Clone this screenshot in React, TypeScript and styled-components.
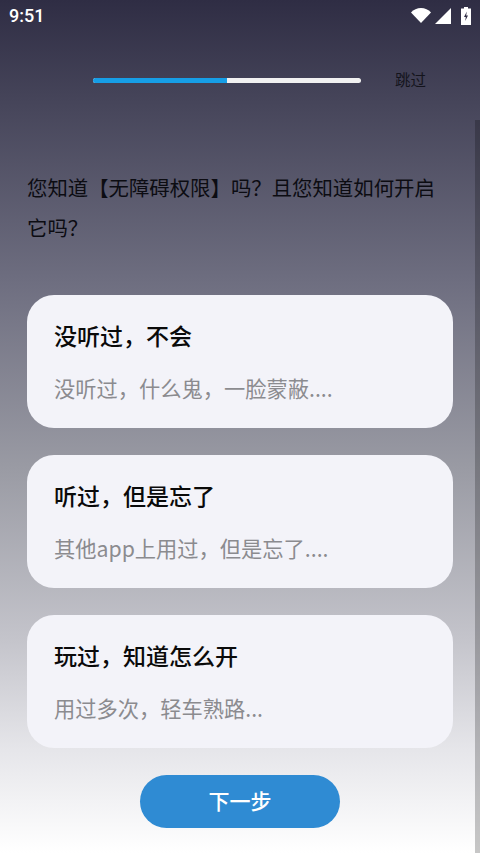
import React from "react";
import styled, { createGlobalStyle } from "styled-components";

const GlobalStyle = createGlobalStyle`
  html, body {
    margin: 0;
    padding: 0;
    height: 100%;
  }

  body {
    font-family: "Noto Sans CJK SC", "Roboto", sans-serif;
  }
`;

interface Choice {
  title: string;
  hint: string;
}

const choices: Choice[] = [
  { title: "没听过，不会", hint: "没听过，什么鬼，一脸蒙蔽...." },
  { title: "听过，但是忘了", hint: "其他app上用过，但是忘了...." },
  { title: "玩过，知道怎么开", hint: "用过多次，轻车熟路..." },
];

const WifiIcon = () => (
  <svg width="20" height="15" viewBox="0 0 20 15">
    <path d="M0 4.500C2.600 1.700 6.100 0 10 0s7.400 1.700 10 4.500L10 15z" fill="#fff" />
  </svg>
);

const SignalIcon = () => (
  <svg width="16" height="16" viewBox="0 0 16 16">
    <path d="M16 0v16H0z" fill="#fff" />
  </svg>
);

const BatteryIcon = () => (
  <svg width="10" height="18" viewBox="0 0 10 18">
    <path d="M3 0h4v1.500h3V18H0V1.500h3z" fill="#fff" />
    <path d="M5.800 4.500 3 10h1.800L4.200 14 7 8.500H5.200z" fill="#2f2d44" />
  </svg>
);

export default function App() {
  return (
    <>
      <GlobalStyle />
      <Screen>
        <StatusBar>
          <Clock>9:51</Clock>
          <StatusIcons>
            <WifiIcon />
            <SignalIcon />
            <BatterySlot>
              <BatteryIcon />
            </BatterySlot>
          </StatusIcons>
        </StatusBar>

        <ProgressRow>
          <ProgressTrack>
            <ProgressFill $percent={50} />
          </ProgressTrack>
          <SkipLabel>跳过</SkipLabel>
        </ProgressRow>

        <Question>您知道【无障碍权限】吗？且您知道如何开启它吗？</Question>

        <ChoiceList>
          {choices.map((choice) => (
            <ChoiceCard key={choice.title}>
              <ChoiceTitle>{choice.title}</ChoiceTitle>
              <ChoiceHint>{choice.hint}</ChoiceHint>
            </ChoiceCard>
          ))}
        </ChoiceList>

        <NextButton type="button">下一步</NextButton>
        <ScrollThumb />
      </Screen>
    </>
  );
}

// styled-components

const Screen = styled.div`
  position: relative;
  display: flex;
  flex-direction: column;
  width: 480px;
  height: 853px;
  overflow: hidden;
  background: linear-gradient(180deg, #2f2d44 0%, #46455a 12%, #6e6e80 33%, #9a9ba4 55%, #c4c4cb 75%, #e6e6ea 88%, #ffffff 100%);
`;

const StatusBar = styled.div`
  display: flex;
  align-items: center;
  justify-content: space-between;
  height: 31px;
  padding: 0 9px;
`;

const Clock = styled.span`
  font-family: "Roboto", sans-serif;
  font-size: 18px;
  font-weight: 500;
  color: #fff;
`;

const StatusIcons = styled.div`
  display: flex;
  align-items: center;
  gap: 4px;
`;

const BatterySlot = styled.span`
  display: flex;
  margin-left: 6px;
`;

const ProgressRow = styled.div`
  display: flex;
  align-items: center;
  height: 32px;
  margin-top: 33px;
  padding-left: 93px;
`;

const ProgressTrack = styled.div`
  width: 268px;
  height: 5px;
  border-radius: 3px;
  background: #f1f1f1;
  overflow: hidden;
`;

const ProgressFill = styled.div<{ $percent: number }>`
  width: ${(p) => p.$percent}%;
  height: 100%;
  background: #169ee6;
`;

const SkipLabel = styled.span`
  margin-left: 34px;
  margin-bottom: 2px;
  font-size: 15.5px;
  color: #14141c;
`;

const Question = styled.p`
  margin: 71px 27px 0;
  font-size: 20.4px;
  line-height: 40px;
  color: #0c0c12;
`;

const ChoiceList = styled.div`
  display: flex;
  flex-direction: column;
  gap: 27px;
  margin: 48px 27px 0;
`;

const ChoiceCard = styled.div`
  display: flex;
  flex-direction: column;
  gap: 23px;
  height: 133px;
  box-sizing: border-box;
  padding: 25px 27px 0;
  border-radius: 27px;
  background: #f3f3f9;
`;

const ChoiceTitle = styled.div`
  font-size: 23px;
  font-weight: 500;
  line-height: 30px;
  color: #0a0a0a;
`;

const ChoiceHint = styled.div`
  font-size: 21.250px;
  line-height: 30px;
  color: #8b8b8f;
`;

const NextButton = styled.button`
  align-self: center;
  width: 200px;
  height: 53px;
  margin-top: 27px;
  padding: 0 0 3px;
  border: 0;
  border-radius: 27px;
  background: #2f8bd3;
  font-family: inherit;
  font-size: 21px;
  font-weight: 500;
  color: #fff;
`;

const ScrollThumb = styled.div`
  position: absolute;
  top: 120px;
  right: 0;
  bottom: 0;
  width: 5px;
  background: rgba(0, 0, 0, 0.22);
`;
